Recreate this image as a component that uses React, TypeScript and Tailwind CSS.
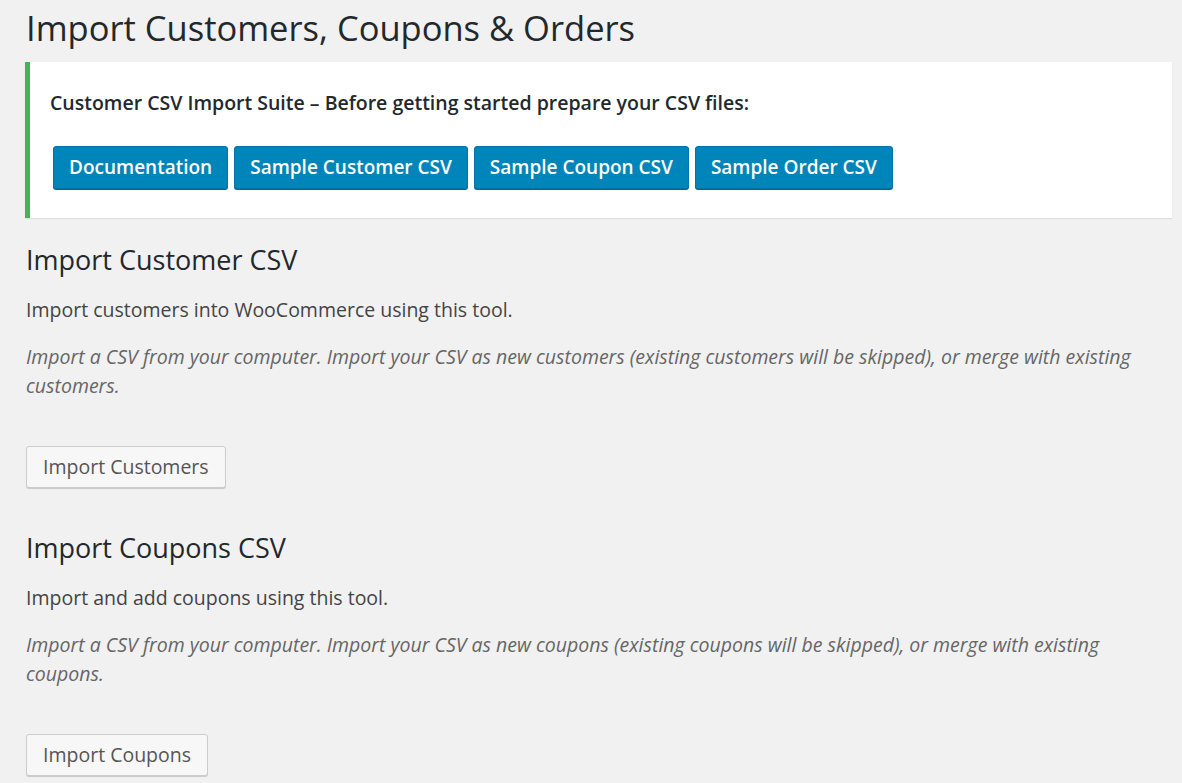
const font = { fontFamily: '"Open Sans", "Noto Sans", sans-serif' };

const samples = ["Documentation", "Sample Customer CSV", "Sample Coupon CSV", "Sample Order CSV"];

function Section({ title, lead, desc, action }: { title: string; lead: string; desc: string; action: string }) {
  return (
    <section className="flex flex-col items-start">
      <h2 className="text-[27px] leading-[34px] text-[#23282d] font-normal pl-px">{title}</h2>
      <p className="mt-[19px] text-[19.5px] leading-[28px] text-[#444] pl-px">{lead}</p>
      <p className="mt-[18px] max-w-[1112px] text-[19.5px] leading-[29px] italic text-[#666] pl-px">{desc}</p>
      <button className="mt-[46px] ml-px h-[42px] px-[16px] text-[19.5px] text-[#555] bg-[#f7f7f7] border border-[#ccc] rounded-[3px] shadow-[0_1px_0_#ccc]">
        {action}
      </button>
    </section>
  );
}

export default function App() {
  return (
    <div className="min-h-screen bg-[#f1f1f1] pl-[25px] pr-[10px] pt-[6px] pb-10" style={font}>
      <h1 className="text-[34.5px] leading-[44px] text-[#23282d] pl-px">Import Customers, Coupons &amp; Orders</h1>

      <div className="mt-[12px] bg-white border-l-[5px] border-[#46b450] shadow-[0_1px_1px_rgba(0,0,0,0.08)] pl-[19px] pt-[27px] pb-[29px]">
        <p className="text-[19.5px] leading-[28px] font-semibold text-[#23282d] pl-px">
          Customer CSV Import Suite – Before getting started prepare your CSV files:
        </p>
        <div className="mt-[29px] ml-[4px] flex gap-[6px]">
          {samples.map((s) => (
            <button
              key={s}
              className="h-[43px] px-[15px] text-[19px] font-semibold text-white bg-[#0085ba] border border-[#0073aa] rounded-[3px] shadow-[0_1px_0_#006799]"
            >
              {s}
            </button>
          ))}
        </div>
      </div>

      <div className="mt-[25px] flex flex-col gap-[43px]">
        <Section
          title="Import Customer CSV"
          lead="Import customers into WooCommerce using this tool."
          desc="Import a CSV from your computer. Import your CSV as new customers (existing customers will be skipped), or merge with existing customers."
          action="Import Customers"
        />
        <Section
          title="Import Coupons CSV"
          lead="Import and add coupons using this tool."
          desc="Import a CSV from your computer. Import your CSV as new coupons (existing coupons will be skipped), or merge with existing coupons."
          action="Import Coupons"
        />
      </div>
    </div>
  );
}
